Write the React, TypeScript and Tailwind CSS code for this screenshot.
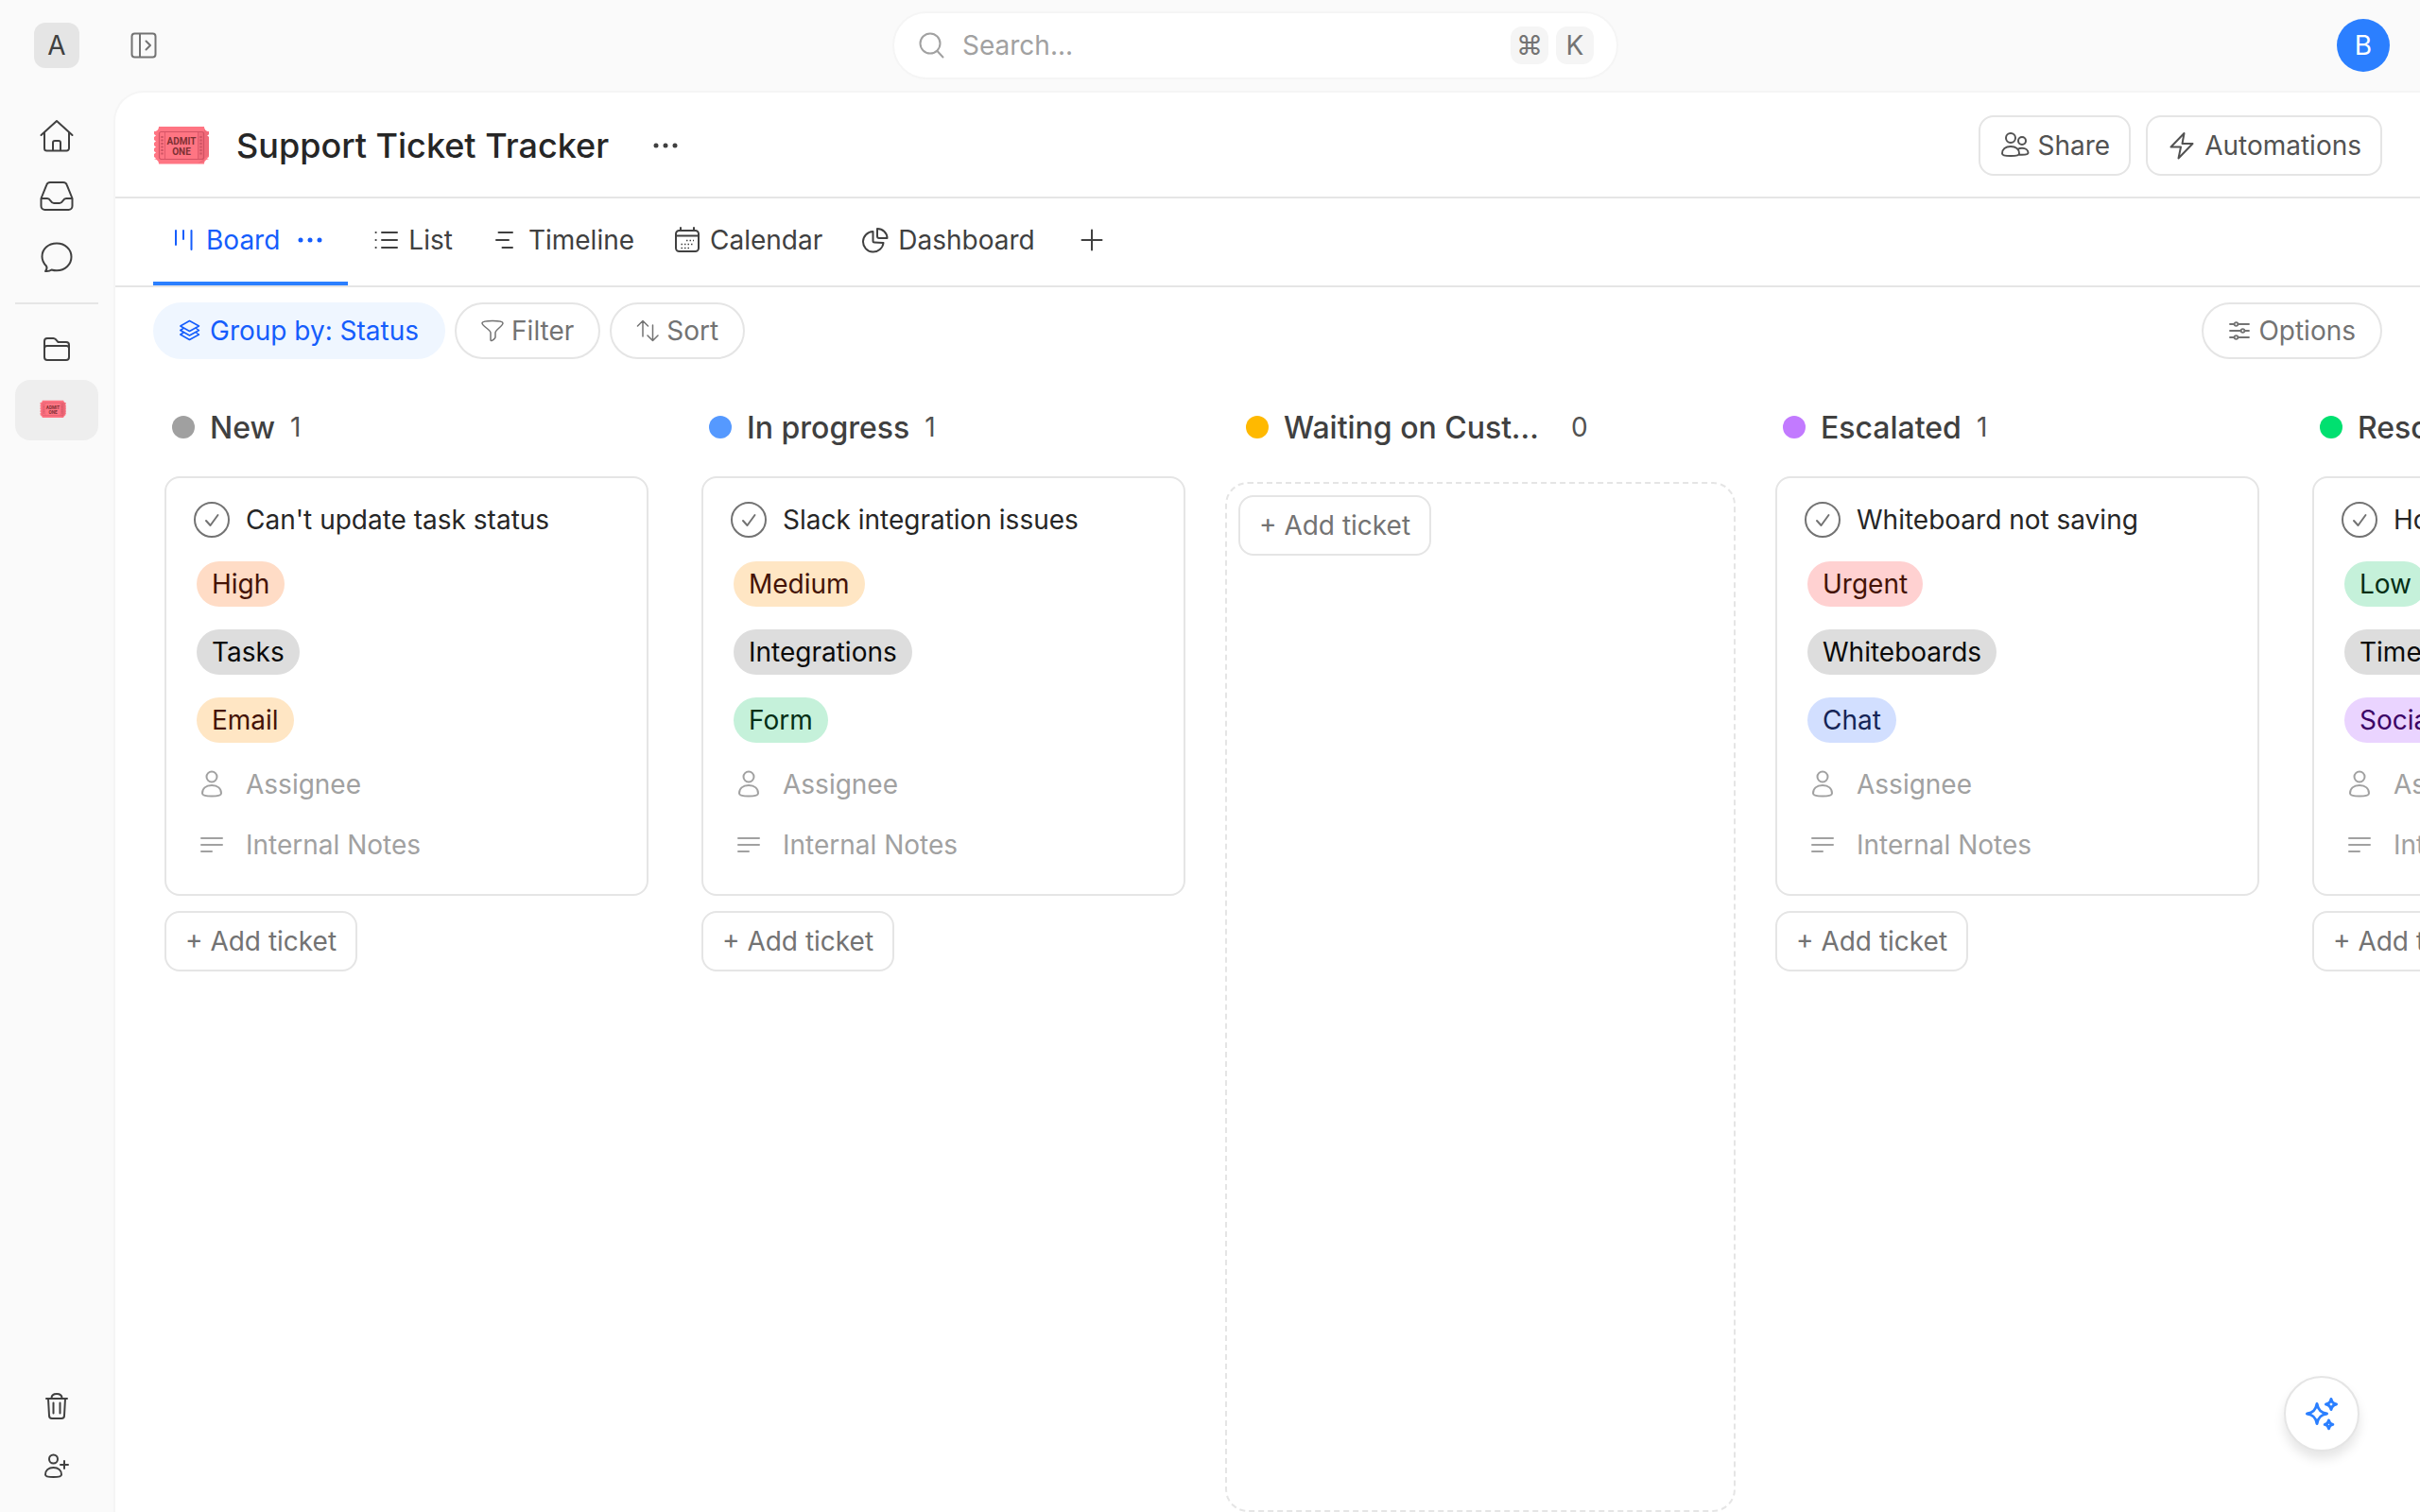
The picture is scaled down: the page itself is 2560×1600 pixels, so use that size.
import React from 'react';

interface Tag {
  label: string;
  tone: string;
}

interface Ticket {
  title: string;
  tags: Tag[];
}

interface Column {
  name: string;
  dot: string;
  tickets: Ticket[];
}

const orange = 'bg-[#ffdcc6] text-orange-950';
const amber = 'bg-[#ffe6c4] text-orange-950';
const gray = 'bg-[#dddddd] text-neutral-950';
const green = 'bg-[#c5f1da] text-green-950';
const red = 'bg-[#ffd1d1] text-orange-950';
const blue = 'bg-[#d2dfff] text-blue-950';
const purple = 'bg-[#ead4ff] text-purple-950';

const columns: Column[] = [
  {
    name: 'New',
    dot: 'bg-[#a0a0a0]',
    tickets: [
      {
        title: "Can't update task status",
        tags: [
          { label: 'High', tone: orange },
          { label: 'Tasks', tone: gray },
          { label: 'Email', tone: amber },
        ],
      },
    ],
  },
  {
    name: 'In progress',
    dot: 'bg-[#5599ff]',
    tickets: [
      {
        title: 'Slack integration issues',
        tags: [
          { label: 'Medium', tone: amber },
          { label: 'Integrations', tone: gray },
          { label: 'Form', tone: green },
        ],
      },
    ],
  },
  { name: 'Waiting on Customer', dot: 'bg-[#ffb900]', tickets: [] },
  {
    name: 'Escalated',
    dot: 'bg-[#c27aff]',
    tickets: [
      {
        title: 'Whiteboard not saving',
        tags: [
          { label: 'Urgent', tone: red },
          { label: 'Whiteboards', tone: gray },
          { label: 'Chat', tone: blue },
        ],
      },
    ],
  },
  {
    name: 'Resolved',
    dot: 'bg-[#00e070]',
    tickets: [
      {
        title: 'How to track time',
        tags: [
          { label: 'Low', tone: green },
          { label: 'Time tracking', tone: gray },
          { label: 'Social media', tone: purple },
        ],
      },
    ],
  },
];

function Icon({
  box,
  className,
  width = 2,
  children,
}: {
  box: string;
  className: string;
  width?: number;
  children: React.ReactNode;
}) {
  return (
    <svg
      className={`flex-shrink-0 ${className}`}
      viewBox={box}
      fill="none"
      stroke="currentColor"
      strokeWidth={width}
      strokeLinecap="round"
      strokeLinejoin="round"
      aria-hidden="true"
    >
      {children}
    </svg>
  );
}

function TicketIcon({ className }: { className: string }) {
  return (
    <svg className={`flex-shrink-0 ${className}`} viewBox="0 0 60 40" aria-hidden="true">
      <path
        d="M6 0h48c0 3 2 5 5 5v3l-2 1.500 2 1.500v3l-2 1.500 2 1.500v3l-2 1.500 2 1.500v3l-2 1.500 2 1.500v3l-2 1.500 2 1c-3 0-5 2-5 5H6c0-3-2-5-5-5l2-1-2-1.500v-3l2-1.500-2-1.500v-3l2-1.500-2-1.500v-3l2-1.500-2-1.500v-3l2-1.500-2-1.500V5c3 0 5-2 5-5z"
        fill="#ff7583"
      />
      <path d="M48 5h6v30h-6z" fill="#f06a79" />
      <path d="M54 2c1 2 2 3.500 5 4v2l-2 1.500 2 1.500v19l-2 2c-2 1-3 2-3 5l-7 2 7-5z" fill="#f06a79" />
      <rect x="6.500" y="5.500" width="47" height="29" rx="2" fill="none" stroke="#d35264" strokeWidth="1.200" />
      <path d="M12.500 6v28M47.500 6v28" stroke="#e0596b" strokeWidth="1" />
      <path d="M9.500 10v21M50.500 10v21" stroke="#cf5565" strokeWidth="2.500" strokeDasharray="2 1.500" />
      <text
        x="30"
        y="19"
        textAnchor="middle"
        fill="#7d3034"
        fontSize="10"
        fontWeight="700"
        fontFamily="'Liberation Sans Narrow', Roboto, sans-serif"
      >
        ADMIT
      </text>
      <text
        x="30"
        y="30"
        textAnchor="middle"
        fill="#7d3034"
        fontSize="10"
        fontWeight="700"
        fontFamily="'Liberation Sans Narrow', Roboto, sans-serif"
      >
        ONE
      </text>
    </svg>
  );
}

function DotsIcon({ className }: { className: string }) {
  return (
    <svg className={className} viewBox="0 0 28 8" fill="currentColor" aria-hidden="true">
      <circle cx="4" cy="4" r="2.500" />
      <circle cx="14" cy="4" r="2.500" />
      <circle cx="24" cy="4" r="2.500" />
    </svg>
  );
}

function Sidebar() {
  return (
    <nav className="w-[120px] flex-shrink-0 flex flex-col px-4 pt-4 pb-4 text-neutral-700">
      <button aria-label="Home" className="h-16 w-[88px] flex items-center justify-center">
        <Icon box="0 0 36 36" className="w-9 h-9">
          <path d="M1.500 17L18 2l16.500 15M5 14v17a2.500 2.500 0 0 0 2.500 2.500h21a2.500 2.500 0 0 0 2.500-2.500V14M14 33.500V25a2 2 0 0 1 2-2h4a2 2 0 0 1 2 2v8.500" />
        </Icon>
      </button>
      <button aria-label="Inbox" className="h-16 w-[88px] flex items-center justify-center">
        <Icon box="0 0 36 36" className="w-9 h-9">
          <path d="M11 3h14a4 4 0 0 1 3.800 2.800L34.500 20v8a4 4 0 0 1-4 4h-25a4 4 0 0 1-4-4v-8L7.200 5.800A4 4 0 0 1 11 3zM1.500 20h6.500c4 0 3 5 7 5h6c4 0 3-5 7-5h6.500" />
        </Icon>
      </button>
      <button aria-label="Chat" className="h-16 w-[88px] flex items-center justify-center">
        <Icon box="0 0 36 36" className="w-9 h-9">
          <path d="M18 3.500C9 3.500 2.500 9.500 2.500 17.500c0 4 1.500 7 4.500 10 1 1.500.5 3.500-1 5.500 2.500.3 5-.3 6.500-1.500 2 .6 3.500.8 5.500.8 9 0 15.500-6.500 15.500-14.500S27 3.500 18 3.500z" />
        </Icon>
      </button>
      <div className="h-0.5 w-[88px] bg-neutral-200 mt-4 mb-4" />
      <button aria-label="Folders" className="h-16 w-[88px] flex items-center justify-center">
        <Icon box="0 0 28 28" className="w-7 h-7">
          <path d="M1 5a3 3 0 0 1 3-3h6.500c1.200 0 1.800.5 2.600 1.300L15.500 6H24a3 3 0 0 1 3 3v13a3 3 0 0 1-3 3H4a3 3 0 0 1-3-3zM1 12.500c0-1.500 1-2.500 2.500-2.500h21c1.500 0 2.500 1 2.500 2.500" />
        </Icon>
      </button>
      <button
        aria-label="Support Ticket Tracker"
        className="h-16 w-[88px] flex items-center rounded-2xl bg-[#eeeeee] pl-[26px] pb-0.5"
      >
        <TicketIcon className="w-7 h-5" />
      </button>
      <div className="flex-1" />
      <button aria-label="Trash" className="h-16 w-[88px] flex items-center justify-center">
        <Icon box="0 0 28 30" className="w-7 h-[30px]">
          <path d="M3 7h22M5 7l1 18a3 3 0 0 0 3 3h10a3 3 0 0 0 3-3l1-18M8.500 6.500C8.500 3.500 10.500 2 14 2s5.500 1.500 5.500 4.500M10.500 11.500v11M17.500 11.500v11" />
        </Icon>
      </button>
      <button aria-label="Invite" className="h-16 w-[88px] flex items-center justify-center">
        <Icon box="0 0 28 28" className="w-7 h-7">
          <circle cx="10.500" cy="6" r="4.500" />
          <path d="M2 22.500C2 18 5.500 15 10.500 15s8.500 3 8.500 7.500c0 1.500-3 2.500-8.500 2.500S2 24 2 22.500zM22 8v8M18 12h8" />
        </Icon>
      </button>
    </nav>
  );
}

function Header() {
  return (
    <header className="h-24 flex items-center">
      <div className="w-24 flex-shrink-0 flex justify-end pr-3">
        <button className="w-12 h-12 rounded-xl bg-neutral-200 text-[28px] leading-10 text-neutral-700">A</button>
      </div>
      <div className="flex-1 flex">
        <button aria-label="Expand sidebar" className="ml-[42px] text-neutral-500">
          <Icon box="0 0 28 28" className="w-7 h-7">
            <rect x="1.500" y="1.500" width="25" height="25" rx="3" />
            <path d="M10 2v24M16.500 9.500l4.500 4.500-4.500 4.500" />
          </Icon>
        </button>
      </div>
      <div className="w-[768px] h-[72px] flex items-center rounded-full border-2 border-neutral-100 bg-white pl-6 pr-6">
        <Icon box="0 0 32 32" className="w-8 h-8 text-neutral-400">
          <circle cx="14" cy="14" r="10.500" />
          <path d="M21.500 22l6 6.500" />
        </Icon>
        <input
          type="text"
          aria-label="Search"
          placeholder="Search..."
          className="flex-1 min-w-0 ml-4 bg-transparent text-[28px] leading-10 placeholder:text-neutral-400 outline-none"
        />
        <div className="flex gap-2 text-[28px] leading-10 text-neutral-500">
          <kbd className="w-10 h-10 rounded-xl bg-neutral-100 text-center font-[Inter,sans-serif]">⌘</kbd>
          <kbd className="w-10 h-10 rounded-xl bg-neutral-100 text-center font-[Inter,sans-serif]">K</kbd>
        </div>
      </div>
      <div className="flex-1 flex justify-end">
        <button className="w-14 h-14 mr-8 rounded-full bg-[#2b7fff] text-white text-[28px] leading-10">B</button>
      </div>
    </header>
  );
}

function TitleBar() {
  const button =
    'h-16 flex items-center gap-2 px-5 rounded-2xl border-2 border-neutral-200 text-[28px] leading-10 text-neutral-600';
  return (
    <div className="h-28 flex items-center px-10 pt-0.5 border-b-2 border-neutral-200">
      <TicketIcon className="w-[60px] h-10" />
      <h1 className="ml-7 text-4xl font-medium text-neutral-800">Support Ticket Tracker</h1>
      <button aria-label="More actions" className="ml-8 w-14 h-14 flex items-center justify-center text-neutral-700">
        <DotsIcon className="w-7 h-2" />
      </button>
      <div className="flex-1" />
      <div className="flex gap-4">
        <button className={button}>
          <Icon box="0 0 32 32" className="w-8 h-8">
            <circle cx="12" cy="8" r="5" />
            <circle cx="24" cy="11" r="4" />
            <path d="M3 24.500C3 20 6.500 17 12 17s9 3 9 7.500c0 1.500-3 2.500-9 2.500s-9-1-9-2.500zM19.500 20c1-.7 2.500-1.200 4.500-1.200 4 0 6.500 2.200 6.500 5 0 1.200-2.500 2-6.500 2-1.200 0-2.300 0-3.200-.2" />
          </Icon>
          Share
        </button>
        <button className={button}>
          <Icon box="0 0 32 32" className="w-8 h-8">
            <path d="M18.500 3L4.500 17.500h10.500L12.500 29.500l15-15.500H16.500z" />
          </Icon>
          Automations
        </button>
      </div>
    </div>
  );
}

function Tab({ label, children }: { label: string; children: React.ReactNode }) {
  return (
    <button className="flex items-center gap-2 px-5 pb-1">
      <Icon box="0 0 32 32" className="w-8 h-8">
        {children}
      </Icon>
      {label}
    </button>
  );
}

function Tabs() {
  return (
    <nav className="h-[94px] flex px-10 border-b-2 border-neutral-200 text-[28px] leading-10 text-neutral-700">
      <div className="flex items-stretch mr-1 px-[22px] border-b-4 border-[#2b7fff] text-blue-600">
        <button className="flex items-center gap-2.5">
          <Icon box="0 0 24 24" className="w-6 h-6">
            <path d="M2 2v15M10 2v9M18.500 2v20" />
          </Icon>
          Board
        </button>
        <button aria-label="View options" className="ml-3.5 w-9 flex items-center justify-center">
          <DotsIcon className="w-7 h-2" />
        </button>
      </div>
      <Tab label="List">
        <path d="M12 8h16M12 16h16M12 24h16M5.500 8h.2M5.500 16h.2M5.500 24h.2" />
      </Tab>
      <Tab label="Timeline">
        <path d="M8.500 8H23M6 16h13M12.500 24H23" />
      </Tab>
      <Tab label="Calendar">
        <rect x="4" y="6" width="24" height="22" rx="3.500" />
        <path d="M4 11.500h24M9 3v3M23 3v3" />
        <g strokeWidth="1.500" strokeDasharray="1.500 2" strokeLinecap="butt">
          <path d="M15 16.500h8M9.500 20.500h13.500M9.500 24.500h10" />
        </g>
      </Tab>
      <Tab label="Dashboard">
        <path d="M13.500 7A10.800 10.800 0 1 0 24.500 19L15 18.500a1.500 1.500 0 0 1-1.500-1.500z" />
        <path d="M18 4v8a2 2 0 0 0 2 2h8.500C28.500 8.500 24 4 18 4z" />
      </Tab>
      <button aria-label="Add view" className="ml-3 w-14 flex items-center justify-center pb-1">
        <Icon box="0 0 24 24" className="w-6 h-6">
          <path d="M12 1.500v21M1.500 12h21" />
        </Icon>
      </button>
    </nav>
  );
}

function Toolbar() {
  const pill = 'h-[60px] flex items-center gap-2 px-[26px] rounded-full border-2 text-[28px] leading-10';
  return (
    <div className="flex gap-2.5 px-10 pt-4 text-neutral-500">
      <button className={`${pill} border-blue-50 bg-blue-50 text-blue-600`}>
        <Icon box="0 0 24 24" className="w-6 h-6" width={1.5}>
          <path d="M10.500 1.500l10 5.500-10 5.500L.8 7z" />
          <path d="M4 9.500l-3.200 2 9.700 5.500 10-5.500-3-2M4 14l-3.200 2 9.700 5.500 10-5.500-3-2" />
        </Icon>
        Group by: Status
      </button>
      <button className={`${pill} border-neutral-200`}>
        <Icon box="0 0 24 24" className="w-6 h-6" width={1.5}>
          <path d="M1 4c0-1.700 4-2.500 11-2.500S23 2.300 23 4c0 3-8 7-8 10v4.500c0 1.500-2 3-3.500 3.800-1 .5-1.500 0-1.500-.8V14C10 11 1 7 1 4z" />
        </Icon>
        Filter
      </button>
      <button className={`${pill} border-neutral-200`}>
        <Icon box="0 0 24 24" className="w-6 h-6" width={1.5}>
          <path d="M7 18V1.500M1.500 7L7 1.500 12.500 7M17.500 6v16.500M12 17l5.500 5.500L23 17" />
        </Icon>
        Sort
      </button>
      <div className="flex-1" />
      <button className={`${pill} border-neutral-200`}>
        <Icon box="0 0 24 24" className="w-6 h-6" width={1.8}>
          <path d="M2 5h4.500M10.500 5H22M2 12h11.500M17.500 12H22M2 19h4.500M10.500 19H22" />
          <circle cx="8.500" cy="5" r="1.900" />
          <circle cx="15.500" cy="12" r="1.900" />
          <circle cx="8.500" cy="19" r="1.900" />
        </Icon>
        Options
      </button>
    </div>
  );
}

function TicketCard({ ticket }: { ticket: Ticket }) {
  return (
    <article className="flex flex-col items-start gap-6 px-7 pt-6 pb-8 rounded-2xl border-2 border-neutral-200 bg-white">
      <div className="flex items-center gap-4 h-10">
        <button aria-label="Mark complete" className="text-neutral-500">
          <Icon box="0 0 40 40" className="w-10 h-10">
            <circle cx="20" cy="20" r="18" />
            <path d="M14 21l4.500 5L26.500 15" />
          </Icon>
        </button>
        <h3 className="text-neutral-800 whitespace-nowrap">{ticket.title}</h3>
      </div>
      {ticket.tags.map((tag) => (
        <span key={tag.label} className={`h-12 ml-1 flex items-center px-4 rounded-full whitespace-nowrap ${tag.tone}`}>
          {tag.label}
        </span>
      ))}
      <div className="flex items-center gap-4 h-10 text-neutral-400">
        <Icon box="0 0 40 40" className="w-10 h-10">
          <circle cx="20" cy="12" r="5.500" />
          <path d="M10 29.500C10 24.500 13.500 21 20 21s10 3.500 10 8.500c0 2-4 3-10 3s-10-1-10-3z" />
        </Icon>
        Assignee
      </div>
      <div className="flex items-center gap-4 h-10 text-neutral-400">
        <Icon box="0 0 40 40" className="w-10 h-10">
          <path d="M9 13h22M9 20h22M9 27h11" />
        </Icon>
        Internal Notes
      </div>
    </article>
  );
}

function AddTicketButton() {
  return (
    <button className="h-16 self-start px-5 rounded-2xl border-2 border-neutral-200 bg-white text-neutral-500">
      + Add ticket
    </button>
  );
}

function BoardColumn({ column }: { column: Column }) {
  return (
    <section className="w-[540px] flex-shrink-0 flex flex-col text-[28px] leading-10">
      <div className="h-20 flex items-center pl-[22px]">
        <span className={`w-6 h-6 rounded-full flex-shrink-0 ${column.dot}`} />
        <h2 className="ml-4 pt-0.5 max-w-[288px] truncate text-[32px] font-medium text-neutral-700">{column.name}</h2>
        <span className="ml-4 text-neutral-600">{column.tickets.length}</span>
      </div>
      {column.tickets.length === 0 ? (
        <div className="flex-1 flex flex-col mt-[18px] p-3 rounded-3xl border-2 border-dashed border-neutral-200">
          <AddTicketButton />
        </div>
      ) : (
        <div className="flex flex-col gap-4 px-3.5 pt-3">
          {column.tickets.map((ticket) => (
            <TicketCard key={ticket.title} ticket={ticket} />
          ))}
          <AddTicketButton />
        </div>
      )}
    </section>
  );
}

export default function App() {
  return (
    <div className="h-screen flex flex-col overflow-hidden bg-neutral-50 font-[Inter,sans-serif]">
      <Header />
      <div className="flex-1 min-h-0 flex">
        <Sidebar />
        <main className="relative flex-1 min-w-0 flex flex-col rounded-tl-[32px] border-t-2 border-l-2 border-neutral-100 bg-white">
          <TitleBar />
          <Tabs />
          <Toolbar />
          <div className="flex-1 min-h-0 flex gap-7 pl-[38px] pt-8 overflow-hidden">
            {columns.map((column) => (
              <BoardColumn key={column.name} column={column} />
            ))}
          </div>
          {/* Assistant button floats over the board */}
          <button
            aria-label="Ask AI"
            className="absolute right-16 bottom-16 w-20 h-20 flex items-center justify-center rounded-full border-2 border-neutral-200 bg-white text-[#2b7fff] shadow-[0_8px_12px_rgba(0,0,0,0.1)]"
          >
            <Icon box="0 0 40 40" className="w-10 h-10" width={3}>
              <path d="M15 9.500c1.200 6.500 4 9.300 10.500 10.500C19 21.200 16.200 24 15 30.500 13.800 24 11 21.200 4.500 20 11 18.800 13.800 16 15 9.500z" />
              <path d="M30 4.500c.7 3.400 2 4.800 5.500 5.500-3.500.7-4.800 2-5.500 5.500-.7-3.500-2-4.800-5.500-5.500 3.500-.7 4.800-2.100 5.500-5.500zM27.500 27c.5 2.700 1.600 3.900 4.300 4.400-2.700.5-3.800 1.600-4.300 4.300-.5-2.700-1.600-3.800-4.300-4.300 2.700-.5 3.800-1.700 4.300-4.400z" />
            </Icon>
          </button>
        </main>
      </div>
    </div>
  );
}
